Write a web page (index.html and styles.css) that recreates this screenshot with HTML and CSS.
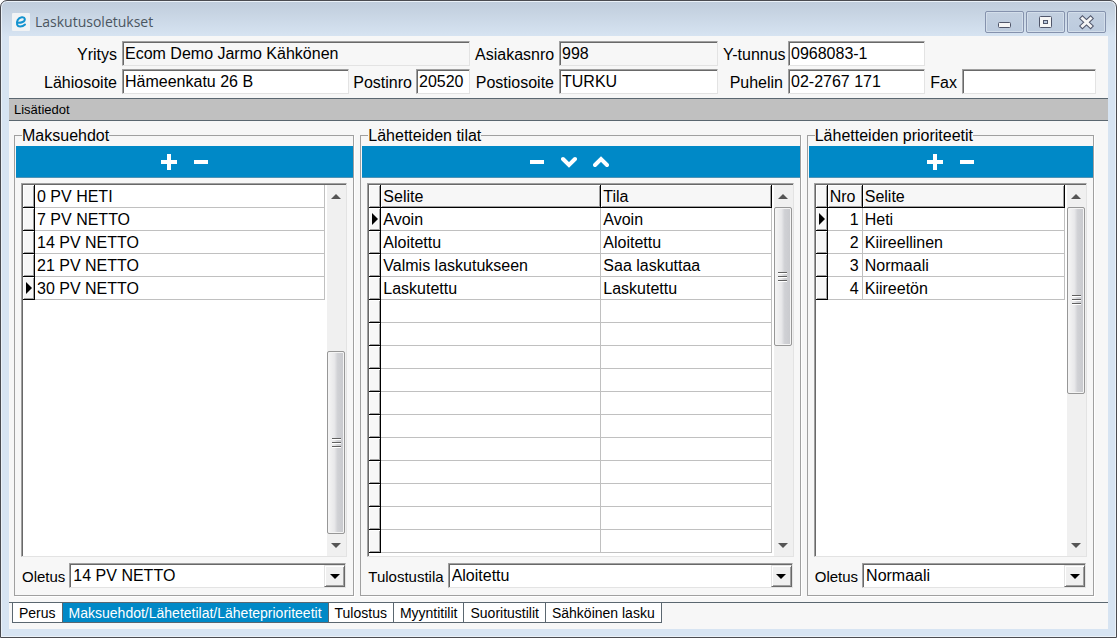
FILE: index.html
```html
<!DOCTYPE html>
<html lang="fi">
<head>
<meta charset="utf-8">
<title>Laskutusoletukset</title>
<link rel="stylesheet" href="styles.css">
</head>
<body>
<div class="window">
  <header class="titlebar">
    <svg class="app-icon" width="18" height="18" viewBox="0 0 18 18" aria-hidden="true">
      <rect width="18" height="18" rx="1" fill="#f1f3f5"/>
      <path d="M5.500 9.800C9 10.200 13.200 8.600 12.800 5.800C12.400 3.300 7.500 3.600 5.700 7C4 10.400 5 13.500 8.200 13.600C10 13.600 11.700 12.900 13 11.500" fill="none" stroke="#1493cf" stroke-width="2" stroke-linecap="round"/>
    </svg>
    <h1 class="title">Laskutusoletukset</h1>
    <div class="window-buttons">
      <button class="window-button" type="button" aria-label="Pienennä">
        <svg width="37" height="20" viewBox="0 0 37 20"><rect x="12.500" y="10.500" width="12" height="5" rx="1" fill="#f6f6f6" stroke="#50566a"/></svg>
      </button>
      <button class="window-button" type="button" aria-label="Suurenna">
        <svg width="37" height="20" viewBox="0 0 37 20"><rect x="12.500" y="4.500" width="12" height="11" rx="1" fill="#f6f6f6" stroke="#50566a"/><rect x="16.500" y="8.500" width="4" height="3" fill="#b9c9de" stroke="#50566a"/></svg>
      </button>
      <button class="window-button" type="button" aria-label="Sulje">
        <svg width="37" height="20" viewBox="0 0 37 20"><path d="M14.500 6.500L22.500 14M22.500 6.500L14.500 14" stroke="#50566a" stroke-width="5" stroke-linecap="square"/><path d="M14.500 6.500L22.500 14M22.500 6.500L14.500 14" stroke="#f6f6f6" stroke-width="3" stroke-linecap="square"/></svg>
      </button>
    </div>
  </header>

  <main class="client">
    <form class="company">
      <label for="company">Yritys</label>
      <input class="field field-locked" id="company" value="Ecom Demo Jarmo Kähkönen" readonly>
      <label for="customer">Asiakasnro</label>
      <input class="field field-locked" id="customer" value="998" readonly>
      <label for="business-id">Y-tunnus</label>
      <input class="field" id="business-id" value="0968083-1">
      <label class="row-start" for="street">Lähiosoite</label>
      <div class="address">
        <input class="field" id="street" value="Hämeenkatu 26 B">
        <label for="postcode">Postinro</label>
        <input class="field postcode" id="postcode" value="20520">
      </div>
      <label for="city">Postiosoite</label>
      <input class="field" id="city" value="TURKU">
      <label for="phone">Puhelin</label>
      <input class="field" id="phone" value="02-2767 171">
      <label for="fax">Fax</label>
      <input class="field" id="fax" value="">
    </form>

    <h2 class="section-bar">Lisätiedot</h2>

    <div class="panels">
      <fieldset class="panel">
        <legend>Maksuehdot</legend>
        <div class="toolbar">
          <button class="tool" type="button" aria-label="Lisää"><svg width="16" height="16" viewBox="0 0 16 16"><path d="M0 8H16M8 0V16" stroke="#fff" stroke-width="4"/></svg></button>
          <button class="tool" type="button" aria-label="Poista"><svg width="16" height="16" viewBox="0 0 16 16"><path d="M1 8H15" stroke="#fff" stroke-width="4"/></svg></button>
        </div>
        <div class="list">
          <div class="grid-area">
            <table class="grid">
              <colgroup><col class="col-mark"><col></colgroup>
              <tbody>
                <tr><td class="mark"></td><td>0 PV HETI</td></tr>
                <tr><td class="mark"></td><td>7 PV NETTO</td></tr>
                <tr><td class="mark"></td><td>14 PV NETTO</td></tr>
                <tr><td class="mark"></td><td>21 PV NETTO</td></tr>
                <tr><td class="mark current"></td><td>30 PV NETTO</td></tr>
              </tbody>
            </table>
          </div>
          <div class="scrollbar">
            <span class="arrow arrow-up"></span>
            <span class="track" style="flex-grow:145"></span>
            <span class="thumb" style="flex-grow:182"></span>
            <span class="arrow arrow-down"></span>
          </div>
        </div>
        <div class="default-row">
          <label for="default-term">Oletus</label>
          <div class="combo">
            <select id="default-term"><option>14 PV NETTO</option><option>0 PV HETI</option><option>7 PV NETTO</option><option>21 PV NETTO</option><option>30 PV NETTO</option></select>
            <span class="combo-button"></span>
          </div>
        </div>
      </fieldset>

      <fieldset class="panel">
        <legend>Lähetteiden tilat</legend>
        <div class="toolbar toolbar-status">
          <button class="tool" type="button" aria-label="Poista"><svg width="16" height="16" viewBox="0 0 16 16"><path d="M1 8H15" stroke="#fff" stroke-width="4"/></svg></button>
          <button class="tool" type="button" aria-label="Siirrä alas"><svg width="16" height="16" viewBox="0 0 16 16"><path d="M2 5L8 11L14 5" fill="none" stroke="#fff" stroke-width="4" stroke-linecap="round"/></svg></button>
          <button class="tool" type="button" aria-label="Siirrä ylös"><svg width="16" height="16" viewBox="0 0 16 16"><path d="M2 11L8 5L14 11" fill="none" stroke="#fff" stroke-width="4" stroke-linecap="round"/></svg></button>
        </div>
        <div class="list">
          <div class="grid-area">
            <table class="grid">
              <colgroup><col class="col-mark"><col class="col-status"><col></colgroup>
              <thead><tr><td class="mark"></td><th scope="col">Selite</th><th scope="col">Tila</th></tr></thead>
              <tbody>
                <tr><td class="mark current"></td><td>Avoin</td><td>Avoin</td></tr>
                <tr><td class="mark"></td><td>Aloitettu</td><td>Aloitettu</td></tr>
                <tr><td class="mark"></td><td>Valmis laskutukseen</td><td>Saa laskuttaa</td></tr>
                <tr><td class="mark"></td><td>Laskutettu</td><td>Laskutettu</td></tr>
                <tr><td class="mark"></td><td></td><td></td></tr>
                <tr><td class="mark"></td><td></td><td></td></tr>
                <tr><td class="mark"></td><td></td><td></td></tr>
                <tr><td class="mark"></td><td></td><td></td></tr>
                <tr><td class="mark"></td><td></td><td></td></tr>
                <tr><td class="mark"></td><td></td><td></td></tr>
                <tr><td class="mark"></td><td></td><td></td></tr>
                <tr><td class="mark"></td><td></td><td></td></tr>
                <tr><td class="mark"></td><td></td><td></td></tr>
                <tr><td class="mark"></td><td></td><td></td></tr>
                <tr><td class="mark"></td><td></td><td></td></tr>
              </tbody>
            </table>
          </div>
          <div class="scrollbar">
            <span class="arrow arrow-up"></span>
            <span class="thumb" style="flex-grow:138"></span>
            <span class="track" style="flex-grow:189"></span>
            <span class="arrow arrow-down"></span>
          </div>
        </div>
        <div class="default-row">
          <label for="print-status">Tulostustila</label>
          <div class="combo">
            <select id="print-status"><option>Aloitettu</option><option>Avoin</option><option>Valmis laskutukseen</option><option>Laskutettu</option></select>
            <span class="combo-button"></span>
          </div>
        </div>
      </fieldset>

      <fieldset class="panel">
        <legend>Lähetteiden prioriteetit</legend>
        <div class="toolbar">
          <button class="tool" type="button" aria-label="Lisää"><svg width="16" height="16" viewBox="0 0 16 16"><path d="M0 8H16M8 0V16" stroke="#fff" stroke-width="4"/></svg></button>
          <button class="tool" type="button" aria-label="Poista"><svg width="16" height="16" viewBox="0 0 16 16"><path d="M1 8H15" stroke="#fff" stroke-width="4"/></svg></button>
        </div>
        <div class="list">
          <div class="grid-area">
            <table class="grid">
              <colgroup><col class="col-mark"><col class="col-number"><col></colgroup>
              <thead><tr><td class="mark"></td><th scope="col">Nro</th><th scope="col">Selite</th></tr></thead>
              <tbody>
                <tr><td class="mark current"></td><td class="number">1</td><td>Heti</td></tr>
                <tr><td class="mark"></td><td class="number">2</td><td>Kiireellinen</td></tr>
                <tr><td class="mark"></td><td class="number">3</td><td>Normaali</td></tr>
                <tr><td class="mark"></td><td class="number">4</td><td>Kiireetön</td></tr>
              </tbody>
            </table>
          </div>
          <div class="scrollbar">
            <span class="arrow arrow-up"></span>
            <span class="thumb" style="flex-grow:186"></span>
            <span class="track" style="flex-grow:141"></span>
            <span class="arrow arrow-down"></span>
          </div>
        </div>
        <div class="default-row">
          <label for="default-priority">Oletus</label>
          <div class="combo">
            <select id="default-priority"><option>Normaali</option><option>Heti</option><option>Kiireellinen</option><option>Kiireetön</option></select>
            <span class="combo-button"></span>
          </div>
        </div>
      </fieldset>
    </div>

    <nav class="tabs">
      <button class="tab" type="button">Perus</button>
      <button class="tab tab-active" type="button">Maksuehdot/Lähetetilat/Läheteprioriteetit</button>
      <button class="tab" type="button">Tulostus</button>
      <button class="tab" type="button">Myyntitilit</button>
      <button class="tab" type="button">Suoritustilit</button>
      <button class="tab" type="button">Sähköinen lasku</button>
    </nav>
  </main>
</div>
</body>
</html>
```
FILE: styles.css
```css
* { box-sizing: border-box; }

body {
  margin: 0;
  background: #fff;
  color: #000;
  font: 16px/18px "Liberation Sans", Arial, sans-serif;
}

button, input, select { font: inherit; color: inherit; }

.window {
  display: flex;
  flex-direction: column;
  min-height: 100vh;
  padding: 0 7px 7px;
  border: 1px solid #4a4b50;
  border-radius: 7px 7px 0 0;
  background: linear-gradient(#bfccdb, #d7e4f2 36px);
  box-shadow: inset 0 0 0 1px #eaf1f8;
}

/* Title bar */
.titlebar {
  display: flex;
  align-items: center;
  height: 35px;
  padding: 7px 3px 0 4px;
}

.title {
  flex: 1;
  margin: 0 0 0 5px;
  color: #4b5661;
  font: 14px/20px "Open Sans", "Noto Sans", sans-serif;
}

.window-buttons { display: flex; gap: 2px; }

.window-button {
  height: 22px;
  padding: 0;
  border: 1px solid #8592ad;
  border-radius: 2px;
  background: linear-gradient(#c3d0e0, #bccbde);
  box-shadow: inset 0 0 0 1px #d3deea;
}

.window-button svg { display: block; }

.client {
  display: flex;
  flex: 1;
  flex-direction: column;
  margin: 0 1px 1px;
  background: #f7f7f7;
}

/* Company details */
.company {
  display: grid;
  grid-template-columns: 108px 348fr 79px 159fr 60px 137fr 27px 134fr;
  gap: 3px 5px;
  align-items: center;
  padding: 5px 12px 4px 0;
}

.company label {
  padding-top: 2px;
  text-align: right;
  white-space: nowrap;
}

.row-start { grid-column-start: 1; }

.address { display: flex; align-items: center; gap: 4px; }
.address .field { flex: 1; }
.address .postcode { flex: 0 0 54px; }

.field {
  width: 100%;
  min-width: 0;
  height: 25px;
  padding: 1px 2px 0;
  border: 1px solid;
  border-color: #a0a0a0 #e3e3e3 #e3e3e3 #a0a0a0;
  border-radius: 0;
  background: #fff;
  box-shadow: inset 1px 1px #696969;
}

.field-locked { background: #f7f7f7; }

.section-bar {
  margin: 0;
  padding: 0 5px;
  border: solid #5b6770;
  border-width: 1px 0;
  background: #c0c0c0;
  font-size: 13px;
  font-weight: normal;
  line-height: 21px;
}

/* Panels */
.panels {
  display: grid;
  flex: 1;
  grid-template-columns: 340fr 440fr 287fr;
  gap: 6px;
  padding: 6px 14px 6px 5px;
}

.panel {
  display: flex;
  flex-direction: column;
  min-width: 0;
  margin: 0;
  padding: 0;
  border: 1px solid #a0a0a0;
  box-shadow: 1px 1px #fff;
}

.panel legend {
  height: 16px;
  margin-left: 7px;
  padding: 0;
  line-height: 18px;
}

.toolbar {
  display: flex;
  justify-content: center;
  gap: 16px;
  height: 32px;
  margin: 3px 0 5px 1px;
  border-bottom: 1px solid #4f93b5;
  background: #0089c7;
}

.toolbar-status { padding-right: 24px; }

.tool { padding: 0; border: 0; background: none; }
.tool svg { display: block; }

.list {
  display: flex;
  flex: 1;
  gap: 2px;
  margin: 0 6px;
  padding: 1px 0 0 1px;
  border: 1px solid;
  border-color: #a0a0a0 #e3e3e3 #e3e3e3 #a0a0a0;
  background: #fff;
  box-shadow: inset 1px 1px #696969;
}

.grid-area { flex: 1; min-width: 0; }

.grid {
  width: 100%;
  border-spacing: 0;
  table-layout: fixed;
}

.col-mark { width: 12px; }
.col-status { width: 220px; }
.col-number { width: 35px; }

.grid td, .grid th {
  height: 23px;
  padding: 2px 2px 0;
  border: solid #c0c0c0;
  border-width: 0 1px 1px 0;
  font-weight: normal;
  line-height: 20px;
  text-align: left;
  white-space: nowrap;
}

.grid th, .grid .mark {
  border-color: #000;
  background: #f7f7f7;
  box-shadow: inset 1px 1px #fff, inset -1px -1px #a0a0a0;
}

.grid .number { padding-right: 3px; text-align: right; }
.grid .mark { padding: 0 0 0 3px; }

.current::before {
  content: "";
  display: block;
  width: 0;
  border: solid transparent;
  border-width: 6px 0 6px 6px;
  border-left-color: #000;
}

/* Scroll bars */
.scrollbar {
  display: flex;
  flex: 0 0 19px;
  flex-direction: column;
  padding-right: 1px;
  background: #f0f0f0;
}

.arrow {
  display: flex;
  flex: 0 0 22px;
  align-items: center;
  justify-content: center;
}

.arrow::before {
  content: "";
  border: solid transparent;
  border-width: 0 5px;
}

.arrow-up::before { border-bottom: 5px solid #555; }
.arrow-down::before { border-top: 5px solid #555; }

.track, .thumb { flex-basis: 0; }

.thumb {
  display: flex;
  align-items: center;
  justify-content: center;
  border: 1px solid #979797;
  border-radius: 2px;
  background: linear-gradient(90deg, #f5f5f5, #e8e8ea 40%, #d0d1d5 60%, #c8c9cd);
  box-shadow: inset 0 0 0 1px #f4f4f4;
}

.thumb::before {
  content: "";
  width: 9px;
  height: 10px;
  background: repeating-linear-gradient(#606060 0 1px, #fff 1px 2px, transparent 2px 4px);
}

/* Default value selectors */
.default-row {
  display: flex;
  align-items: center;
  gap: 4px;
  margin: 6px 7px 7px;
}

.default-row label {
  padding-top: 2px;
  font-size: 15px;
}

.combo { position: relative; flex: 1; min-width: 0; }

.combo select {
  display: block;
  width: 100%;
  height: 25px;
  padding: 1px 22px 0 3px;
  border: 1px solid;
  border-color: #a0a0a0 #e3e3e3 #e3e3e3 #a0a0a0;
  border-radius: 0;
  background: #fff;
  box-shadow: inset 1px 1px #696969;
  appearance: none;
}

.combo-button {
  position: absolute;
  inset: 2px 1px 1px auto;
  display: flex;
  align-items: center;
  justify-content: center;
  width: 21px;
  border: 1px solid;
  border-color: #e3e3e3 #696969 #696969 #e3e3e3;
  background: #f0f0f0;
  box-shadow: inset 1px 1px #fff, inset -1px -1px #a0a0a0;
  pointer-events: none;
}

.combo-button::before {
  content: "";
  border: solid transparent;
  border-width: 5px 5px 0;
  border-top-color: #000;
}

/* Page tabs */
.tabs {
  display: flex;
  padding: 0 3px 6px;
  border-top: 1px solid #5b6770;
}

.tab {
  height: 20px;
  margin: 0 0 0 -1px;
  padding: 1px 6px 0;
  border: 1px solid #5b6770;
  border-top: 0;
  background: #fff;
  font-size: 14px;
  line-height: 18px;
  white-space: nowrap;
}

.tab:first-child { margin-left: 0; }
.tab-active { background: #0089c7; color: #fff; }
```
